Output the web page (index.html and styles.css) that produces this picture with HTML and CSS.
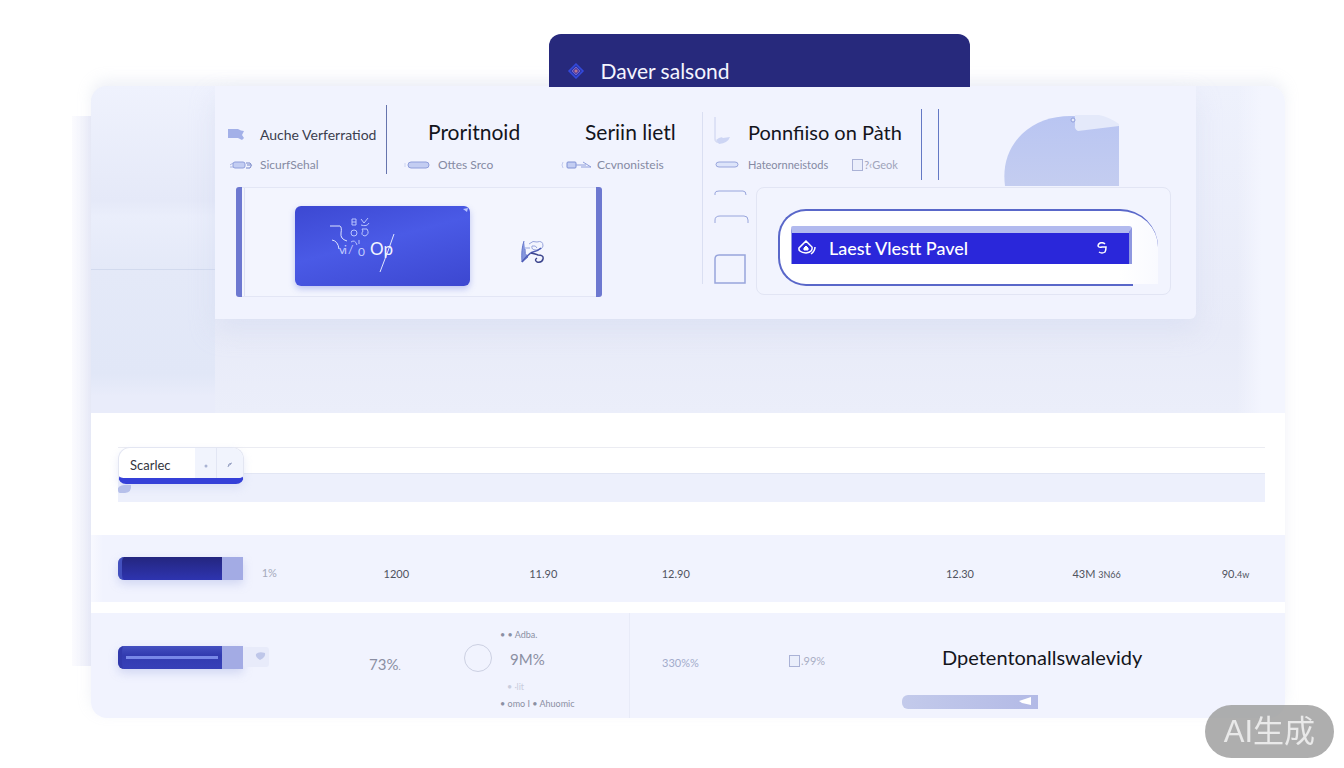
FILE: index.html
```html
<!DOCTYPE html>
<html lang="en">
<head>
    <meta charset="UTF-8">
    <meta name="viewport" content="width=device-width, initial-scale=1.0">
    <title>Daver salsond</title>
    <link rel="stylesheet" href="styles.css">
</head>
<body>
    <header class="tab">
        <svg width="18" height="16" viewBox="0 0 18 16">
            <path d="M9 1L16 8L9 15L2 8Z" fill="#2a35a8" stroke="#3349dc" stroke-width="1.5"/>
            <path d="M9 4L13 8L9 12L5 8Z" fill="#5b3f9e" stroke="#6f66cc"/>
            <circle cx="9" cy="8" r="1.5" fill="#b9788f"/>
        </svg>
        <span>Daver salsond</span>
    </header>

    <main class="card">
        <section class="hero">
            <div class="side"></div>

            <div class="panel">
                <!-- Left half -->
                <div class="half">
                    <div class="heads heads-left">
                        <div class="head head-small">
                            <h2><svg width="32" height="14" viewBox="0 0 32 14"><path d="M0 1H10Q13 3 16 3L14 7L16 10L14 12L10 10H0Z" fill="#a3b0e8"/></svg>Auche Verferratiod</h2>
                            <p><svg width="32" height="10" viewBox="0 0 32 10"><path d="M2 5L5 3M2 7H6" stroke="#aab5e2" fill="none"/><rect x="5" y="2" width="12" height="6" rx="2" fill="#c3cdf2" stroke="#8f9edb"/><path d="M18 3H22Q25 5 22 8H18M19 5H23" stroke="#7585c8" fill="none"/></svg>SicurfSehal</p>
                        </div>
                        <div class="head head-second">
                            <h2>Proritnoid</h2>
                            <p><svg width="34" height="10" viewBox="0 0 34 10"><rect x="4" y="2" width="21" height="6" rx="3" fill="#c3cdf2" stroke="#8f9edb"/><path d="M1 3V7" stroke="#cdd4f2"/></svg>Ottes Srco</p>
                        </div>
                        <div class="head head-third">
                            <h2>Seriin lietl</h2>
                            <p><svg width="36" height="10" viewBox="0 0 36 10"><path d="M2 2Q0 5 2 8" stroke="#c3cbee" fill="none"/><rect x="6" y="2" width="9" height="6" rx="1" fill="#c3cdf2" stroke="#7f90d4"/><path d="M15 5H25M22 2L30 7H20" stroke="#8f9edb" fill="none"/></svg>Ccvnonisteis</p>
                        </div>
                    </div>
                    <div class="frame">
                        <button class="tile" type="button" aria-label="Vi% Op">
                            <svg width="175" height="80" viewBox="0 0 175 80">
                                <g fill="none" stroke="#dfe5ff" stroke-width="1">
                                    <path d="M35 20H45Q47 21 46 27T52 35"/>
                                    <path d="M37 34Q43 35 44 43"/>
                                    <path d="M99 28L93 45L85 66"/>
                                    <g stroke="#b9c4ff">
                                        <path d="M57 13H61V19H57ZM57 16H61"/>
                                        <path d="M66 13L69 17L73 12M66 19Q72 21 74 17"/>
                                        <circle cx="59" cy="27" r="3"/>
                                        <path d="M67 23H72Q75 28 70 30Q65 29 68 25Z"/>
                                        <path d="M56 36Q60 33 62 39M64 34V38"/>
                                    </g>
                                </g>
                                <text x="44" y="48" class="tile-small">v</text>
                                <text x="49" y="48" class="tile-small">i</text>
                                <text x="53" y="48" class="tile-small">/</text>
                                <text x="63" y="50" class="tile-small">0</text>
                                <text x="75" y="49" class="tile-text">Op</text>
                                <path d="M168 3L173 2L172 6Z" fill="#b9c4ff"/>
                            </svg>
                        </button>
                        <svg class="scribble" width="24" height="24" viewBox="0 0 24 24" fill="none">
                            <path d="M3 1Q0 9 1 22L7 17Q3 14 4 9" fill="#8496dd" stroke="#6576cc"/>
                            <path d="M4 8H9M8 4Q12 0 16 2Q22 0 22 6Q21 10 15 10Q10 10 11 6Q15 5 16 8" stroke="#97a4dc"/>
                            <path d="M1 22Q8 13 12 12Q17 11 20 8" stroke="#4d5bb4" stroke-width="1.5"/>
                            <path d="M10 13Q15 14 17 15Q23 15 22 19Q21 23 16 22Q13 20 16 18" stroke="#3d468e" stroke-width="1.5"/>
                        </svg>
                    </div>
                </div>

                <!-- Right half -->
                <div class="half half-right">
                    <div class="heads heads-right">
                        <div class="head head-path">
                            <h2><svg width="34" height="30" viewBox="0 0 34 30"><path d="M1 0V22Q1 26 5 25" stroke="#c9d0ee" fill="none"/><path d="M2 23Q7 19 9 21L16 20Q14 26 5 27Z" fill="#cdd5f4"/></svg>Ponnfiiso on Pàth</h2>
                            <p class="narrow"><svg width="34" height="10" viewBox="0 0 34 10"><rect x="2" y="2" width="22" height="5" rx="3" fill="#dde4fa" stroke="#98a5dc"/></svg><span>Hateornneistods</span>
                                <label class="check"><input type="checkbox">?‹Geok</label></p>
                        </div>
                        <div class="lines"></div>
                        <svg class="blob" width="116" height="71" viewBox="0 0 116 71">
                            <defs><linearGradient id="g" x1="0" y1="0" x2="0" y2="1"><stop offset="0" stop-color="#b9c5f2"/><stop offset="1" stop-color="#c4cdf0"/></linearGradient></defs>
                            <path d="M1 71Q-3 40 18 19Q38 0 70 1L115 11V71Z" fill="url(#g)"/>
                            <path d="M71 0H95Q105 2 115 9V11L74 16Q70 14 71 10Z" fill="#e4e9fa"/>
                            <circle cx="69" cy="5" r="2" fill="#e4e9fa" stroke="#8f9edb"/>
                        </svg>
                    </div>
                    <div class="lower">
                        <svg class="shapes" width="36" height="98" viewBox="0 0 36 98" fill="none" stroke="#98a5dc">
                            <path d="M1 8V6Q1 4 5 4H29Q32 4 32 8"/>
                            <path d="M1 36V33Q1 29 6 29H30Q34 29 34 33V36"/>
                            <path d="M5 68H31V96H1V72Q1 68 5 68Z" stroke-width="1.5"/>
                        </svg>
                        <div class="outline">
                            <div class="pill">
                                <button class="primary" type="button">
                                    <svg width="18" height="16" viewBox="0 0 18 16" fill="none" stroke="#fff" stroke-width="1.5">
                                        <path d="M8 1L14 7Q15 12 8 13Q0 12 1 8Z"/>
                                        <path d="M8 6Q5 8 6 10H10Q11 8 8 6Z" fill="#fff" stroke-width="1"/>
                                        <path d="M17 7Q17 11 13 14"/>
                                    </svg>
                                    <span>Laest Vlestt Pavel</span>
                                    <svg class="mark" width="10" height="12" viewBox="0 0 10 12" fill="none" stroke="#fff" stroke-width="1.5">
                                        <path d="M8 2Q6 0 3 1Q1 2 1 4Q2 6 5 5H9Q9 8 8 10Q5 12 2 10"/>
                                    </svg>
                                </button>
                            </div>
                        </div>
                    </div>
                </div>
            </div>
        </section>

        <section class="toolbar">
            <div class="search">
                <input type="text" value="Scarlec" aria-label="Scarlec">
                <button type="button" aria-label="Dot"><svg width="4" height="4"><circle cx="2" cy="2" r="1.5" fill="#a9b3d3"/></svg></button>
                <button type="button" aria-label="Open"><svg width="6" height="6" viewBox="0 0 6 6"><path d="M1 5L2 2L5 1M1 4L4 2" stroke="#97a1c4" fill="none"/></svg></button>
            </div>
            <svg class="leaf" width="14" height="10" viewBox="0 0 14 10"><path d="M0 4Q3 0 13 1Q14 8 7 9H2Q0 9 0 6Z" fill="#b6c0ea"/></svg>
        </section>

        <table class="figures">
            <tbody>
                <tr>
                    <td class="c-bar"><div class="bar"><span class="fill"></span></div></td>
                    <td class="c-pct">1%</td>
                    <td class="c-a">1200</td>
                    <td class="c-b">11.90</td>
                    <td class="c-c">12.90</td>
                    <td class="c-d">12.30</td>
                    <td class="c-e">43M <small>3N66</small></td>
                    <td class="c-f">90.<small>4w</small></td>
                </tr>
            </tbody>
        </table>

        <section class="details">
            <div class="meter">
                <div class="bar"><span class="fill fill-line"></span></div>
                <svg width="26" height="20" viewBox="0 0 26 20"><rect width="26" height="20" rx="3" fill="#e8ebfa"/><path d="M13 7Q16 4 22 6Q23 10 17 13Q12 10 13 7Z" fill="#bfc7e9"/></svg>
            </div>
            <div class="value">73%<small>.</small></div>
            <div class="ring-group">
                <span class="ring"></span>
                <ul>
                    <li>• • Adba.</li>
                    <li class="big">9M%</li>
                    <li class="pale">• ·lit</li>
                    <li class="tiny">• omo I • Ahuomic</li>
                </ul>
            </div>
            <div class="split">330%%</div>
            <div class="tick"><label class="check"><input type="checkbox">.99%</label></div>
            <div class="summary">
                <h3>Dpetentonallswalevidy</h3>
                <div class="strip"><svg width="14" height="8" viewBox="0 0 14 8"><path d="M0 4L12 0V8L3 6Z" fill="#fff"/></svg></div>
            </div>
        </section>
    </main>

    <div class="badge">AI生成</div>
</body>
</html>
```

FILE: styles.css
```css
* {
    box-sizing: border-box;
}
body {
    margin: 0;
    padding: 34px 59px 50px 91px;
    background-color: #fff;
    font-family: Lato, "Liberation Sans", "Noto Sans CJK SC", sans-serif;
    color: #14151c;
}
h2, h3, p, ul {
    margin: 0;
    padding: 0;
    font-weight: 400;
}
button {
    border: none;
    padding: 0;
    font-family: inherit;
    cursor: pointer;
}
svg {
    flex: none;
}
.tab {
    position: relative;
    z-index: 1;
    display: flex;
    align-items: center;
    gap: 15px;
    width: 35.2%;
    height: 53px;
    margin: 0 0 -1px 38.4%;
    padding: 20px 18px 0;
    border-radius: 12px 12px 0 0;
    background-color: #27297c;
    color: #f4f5ff;
    font-size: 21px;
    line-height: 32px;
}
.card {
    position: relative;
    border-radius: 16px;
    background-color: #fff;
    box-shadow: 0 -6px 14px rgba(190, 200, 225, 0.25);
}
.card::before {
    content: "";
    position: absolute;
    z-index: -1;
    top: 30px;
    bottom: 52px;
    left: -19px;
    width: 19px;
    background: linear-gradient(to right, #fbfbfe, #eceefa);
}

/* Top area */
.hero {
    display: flex;
    align-items: flex-start;
    padding-right: 89px;
    border-radius: 16px 16px 0 0;
    background: linear-gradient(to right, transparent 96%, #f3f5fe 98%), linear-gradient(#eef1fc, #e9ecf9 60%, #e8ebf8 75%, #ebeefa);
}
.side {
    width: 124px;
    height: 327px;
    border-radius: 16px 0 0 0;
    background:
        linear-gradient(#d2daee, #d2daee) 0 183px / 100% 1px no-repeat,
        linear-gradient(#eff2fd, #e5e9f8 35%, #eaeefb 40%, #e4e9f8 56%, #e1e7f7 88%, #e9ecfa 95%);
}
.panel {
    flex: 1;
    display: grid;
    grid-template-columns: 487fr 494fr;
    padding-bottom: 22px;
    border-radius: 0 0 6px 0;
    background-color: #f1f3fe;
    box-shadow: 0 12px 24px rgba(205, 212, 238, 0.4);
}
.heads {
    display: grid;
    height: 101px;
}
.heads-left {
    grid-template-columns: 172fr 174fr 141fr;
}
.heads-right {
    grid-template-columns: 219fr 83fr 192fr;
}
.head {
    padding-top: 31px;
    white-space: nowrap;
}
.head h2 {
    display: flex;
    align-items: center;
    height: 30px;
    font-size: 21px;
    line-height: 30px;
}
.head p {
    display: flex;
    align-items: center;
    height: 36px;
    color: #858aa3;
    font-size: 12px;
    line-height: 36px;
}
.head-small {
    position: relative;
    padding-left: 13px;
}
.head-small::after {
    content: "";
    position: absolute;
    top: 19px;
    right: 0;
    width: 1px;
    height: 69px;
    background-color: #6674ad;
}
.head-small h2 {
    padding-top: 6px;
    color: #3c3e4e;
    font-size: 14px;
}
.head-second {
    padding-left: 17px;
}
.head-second h2,
.head-third h2 {
    padding-left: 24px;
}
.head-path {
    padding-left: 12px;
}
.head-path h2 {
    font-size: 20px;
}
.head .narrow {
    font-size: 11px;
}
.check {
    display: flex;
    align-items: center;
    gap: 1px;
}
.check input {
    appearance: none;
    width: 11px;
    height: 12px;
    margin: 0;
    border: 1px solid #aab2d6;
    background-color: #eaeefb;
}
.head-path .check {
    margin-left: 24px;
    color: #a0a4ba;
}
.lines {
    width: 18px;
    height: 71px;
    margin-top: 23px;
    border: 1px solid #6478c4;
    border-width: 0 1px;
}
.blob {
    margin-top: 29px;
}
.frame {
    display: flex;
    align-items: center;
    height: 110px;
    margin: 0 100px 0 21px;
    padding-left: 53px;
    border: 6px solid #6d78d0;
    border-width: 0 6px;
    border-radius: 3px;
    background:
        linear-gradient(#e3e6f5, #e3e6f5) 0 0 / 100% 1px no-repeat,
        linear-gradient(#e3e6f5, #e3e6f5) 0 100% / 100% 1px no-repeat,
        linear-gradient(#dde1f2, #dde1f2) 2px 0 / 1px 100% no-repeat,
        #f3f5fe;
}
.tile {
    height: 80px;
    margin-top: 8px;
    border-radius: 6px;
    background: linear-gradient(165deg, #3c48d2, #4a5ae6 45%, #3c47d0);
    box-shadow: 0 3px 6px rgba(90, 105, 220, 0.35);
}
.tile-text {
    fill: #f2f4ff;
    font-size: 17px;
}
.tile-small {
    fill: #c3ccff;
    font-size: 12px;
}
.scribble {
    margin: 20px 0 0 51px;
}
.half-right {
    position: relative;
}
.half-right::before {
    content: "";
    position: absolute;
    top: 26px;
    left: 0;
    width: 1px;
    height: 172px;
    background-color: #dadff2;
}
.lower {
    display: flex;
    gap: 6px;
    padding: 0 25px 0 12px;
}
.outline {
    flex: 1;
    height: 108px;
    padding: 21px 12px 0 21px;
    border: 1px solid #e2e5f4;
    border-radius: 8px;
    background-color: #f2f4fe;
}
.pill {
    position: relative;
    height: 77px;
    padding: 15px 26px 0 11px;
    border: 2px solid #5967c9;
    border-right: none;
    border-radius: 28px 38px 0 28px;
    background: linear-gradient(to right, #fff 90%, #f9faff);
}
/* the lower line stops short of the corner */
.pill::after {
    content: "";
    position: absolute;
    right: 0;
    bottom: -2px;
    width: 25px;
    height: 2px;
    background-color: #f2f4fe;
}
.primary {
    display: flex;
    align-items: center;
    width: 100%;
    height: 38px;
    padding: 0 22px 1px 6px;
    border-top: 7px solid #b2baee;
    border-right: 3px solid #8f98e0;
    border-left: 1px solid #8f98e0;
    border-radius: 2px 3px 0 0;
    background-color: #2a27da;
    color: #fff;
    font-size: 18px;
    font-weight: 500;
    gap: 13px;
    white-space: nowrap;
}
.mark {
    margin-left: auto;
}

/* Search strip */
.toolbar {
    height: 55px;
    margin: 34px 20px 33px 27px;
    background:
        linear-gradient(#ebecf2, #ebecf2) 0 0 / 100% 1px no-repeat,
        linear-gradient(#e2e6f4, #e2e6f4) 0 26px / 100% 1px no-repeat,
        linear-gradient(transparent 26px, #edf0fc 26px);
}
.search {
    display: flex;
    width: 126px;
    height: 37px;
    border: 1px solid #e3e6f2;
    border-bottom: 6px solid #3540d8;
    border-radius: 12px 12px 8px 8px;
    background-color: #fff;
    overflow: hidden;
    box-shadow: 0 4px 8px rgba(180, 190, 235, 0.3);
}
.search input {
    width: 76px;
    height: 30px;
    padding: 4px 0 0 11px;
    border: none;
    outline: none;
    background: none;
    color: #33343d;
    font-family: inherit;
    font-size: 13px;
}
.search button {
    width: 21px;
    height: 30px;
    background-color: #f1f4fd;
}
.search button + button {
    flex: 1;
    border-left: 1px solid #e2e6f4;
}
.leaf {
    display: block;
}

/* Figures */
.figures {
    width: 100%;
    height: 67px;
    border-collapse: collapse;
    table-layout: fixed;
    background: linear-gradient(to right, #f8f9ff, #f1f3fe 12px);
    color: #50535f;
    font-size: 11px;
}
.figures td {
    padding: 10px 0 0;
    white-space: nowrap;
}
.figures .c-bar {
    width: 14.3%;
    padding: 0 0 0 27px;
}
.figures .c-pct {
    width: 10.2%;
    padding-top: 7px;
    color: #a5a9bb;
}
.c-a {
    width: 12.2%;
}
.c-b {
    width: 11.1%;
}
.c-c {
    width: 23.8%;
}
.c-d {
    width: 10.6%;
}
.c-e {
    width: 12.5%;
}
.c-f {
    width: 5.3%;
}
small {
    font-size: 9px;
}
.bar {
    width: 125px;
    height: 23px;
    border-radius: 6px 0 0 6px;
    background-color: #a3abe4;
    box-shadow: 0 4px 10px rgba(150, 160, 220, 0.35);
}
.fill {
    display: block;
    width: 104px;
    height: 100%;
    border-radius: 6px 0 0 6px;
    border-left: 4px solid #4350be;
    background: linear-gradient(#24267f, #2e34b0);
}
.fill-line {
    border-left-color: #3139ac;
    background:
        linear-gradient(#7888e8, #7888e8) 4px 10px / 92px 3px no-repeat,
        linear-gradient(#4450c0, #323bb0 40%, #3740b8);
}
.details {
    display: grid;
    grid-template-columns: 278fr 95fr 165fr 160fr 113fr 383fr;
    height: 105px;
    margin-top: 11px;
    border-radius: 0 0 16px 16px;
    background-color: #f1f3fe;
    color: #8b8fa3;
}
.meter {
    display: flex;
    align-items: center;
    height: 88px;
    padding-left: 27px;
}
.value {
    padding-top: 40px;
    font-size: 15px;
    line-height: 22px;
}
.ring-group {
    display: flex;
    gap: 8px;
}
.ring {
    width: 28px;
    height: 28px;
    margin-top: 31px;
    border: 1px solid #ccd0e2;
    border-radius: 50%;
}
.ring-group ul {
    list-style: none;
    padding-top: 14px;
    font-size: 9px;
    line-height: 16px;
    white-space: nowrap;
}
.ring-group .big {
    padding-left: 10px;
    font-size: 15px;
    line-height: 32px;
}
.ring-group .pale {
    padding-left: 7px;
    color: #c9cddd;
    line-height: 24px;
}
.ring-group .tiny {
    line-height: 10px;
}
.split {
    padding: 40px 0 0 32px;
    border-left: 1px solid #e8ebf8;
    color: #a2abcb;
    font-size: 11px;
    line-height: 20px;
}
.tick {
    padding-top: 38px;
    color: #a9aec4;
    font-size: 11px;
    line-height: 20px;
}
.summary h3 {
    padding: 29px 0 0 40px;
    color: #14151c;
    font-size: 20px;
    line-height: 30px;
}
.strip {
    display: flex;
    align-items: center;
    justify-content: flex-end;
    width: 136px;
    height: 14px;
    margin-top: 23px;
    padding: 0 5px 3px 0;
    border-radius: 6px 0 0 6px;
    background: linear-gradient(to right, #c3caeb, #b3bae6);
}
.badge {
    position: fixed;
    right: 10px;
    bottom: 10px;
    padding: 0 19px;
    border-radius: 27px;
    background-color: rgba(160, 160, 160, 0.85);
    color: #e9e9e9;
    font-family: "Liberation Sans", "Noto Sans CJK SC", sans-serif;
    font-size: 31px;
    line-height: 53px;
}
```
